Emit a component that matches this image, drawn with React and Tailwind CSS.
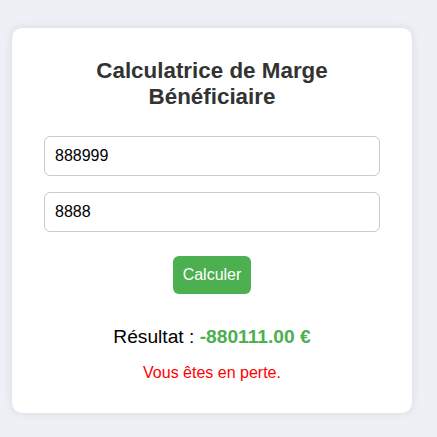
import { useState } from "react";

function App() {
  const [revenu, setRevenu] = useState("888999");
  const [cout, setCout] = useState("8888");
  const marge = (Number(cout) - Number(revenu)).toFixed(2);

  return (
    <div className="min-h-[437px] bg-[#edf0f4] pt-[28px] pl-[12px] font-['Liberation_Sans',Arial,sans-serif]">
      <div className="w-[400px] bg-white rounded-[10px] shadow-[0_0_10px_rgba(0,0,0,0.1)] px-8 pt-[30px] pb-[28px] text-center">
        <h2 className="text-[22.4px] leading-[26px] font-bold text-[#333] mb-[26px]">
          Calculatrice de Marge Bénéficiaire
        </h2>

        <div className="flex flex-col gap-4">
          <input
            type="number"
            value={revenu}
            onChange={(e) => setRevenu(e.target.value)}
            className="w-full h-10 px-[10px] text-base text-black border border-[#ccc] rounded-[6px] outline-none"
          />
          <input
            type="number"
            value={cout}
            onChange={(e) => setCout(e.target.value)}
            className="w-full h-10 px-[10px] text-base text-black border border-[#ccc] rounded-[6px] outline-none"
          />
        </div>

        <button className="mt-6 h-[38px] px-[10px] bg-[#4caf50] text-white text-base rounded-[6px]">
          Calculer
        </button>

        <p className="mt-[29px] text-[19.2px] leading-[28px] text-black">
          Résultat : <span className="font-bold text-[#4caf50]">{marge} €</span>
        </p>
        <p className="mt-[10px] text-base leading-6 text-[#ff0000]">Vous êtes en perte.</p>
      </div>
    </div>
  );
}

export default App;
